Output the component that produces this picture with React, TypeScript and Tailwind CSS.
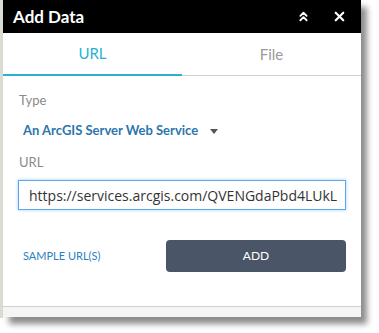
import { ChevronsUp, X } from 'lucide-react';

export default function App() {
	return (
		<div
			className="flex h-[333px] w-[379px] bg-white"
			style={{ fontFamily: "Lato, 'Open Sans', sans-serif" }}
		>
			<div className="w-[3px] h-[318px] bg-[#d9dcd2]" />
			<div className="w-[358px] h-[317px] bg-white flex flex-col shadow-[6px_7px_6px_rgba(0,0,0,0.45)]">
				{/* Header */}
				<div className="h-[33px] bg-black flex items-center pl-[10px] pr-[14px]">
					<span className="text-white text-[17px] font-bold flex-1">Add Data</span>
					<ChevronsUp className="text-white w-[15px] h-[15px] mr-[21px]" strokeWidth={3} />
					<X className="text-white w-[15px] h-[15px]" strokeWidth={3.5} />
				</div>

				{/* Tabs */}
				<div className="flex h-[43px] border-b border-[#cfcfcf]">
					<div className="w-[179px] flex items-center justify-center text-[15px] text-[#27b3cf] border-b-2 border-[#27b3cf] -mb-px">
						URL
					</div>
					<div className="flex-1 flex items-center justify-center text-[15px] text-[#9a9a9a]">
						File
					</div>
				</div>

				{/* Body */}
				<div className="flex flex-col px-[16px] pt-[15px]">
					<span className="text-[13px] text-[#8a8a8a] leading-[18px]">Type</span>
					<div className="flex items-center mt-[13px] pl-[4px] h-[18px]">
						<span className="text-[13px] font-bold text-[#2c76ad]">
							An ArcGIS Server Web Service
						</span>
						<span className="ml-[12px] w-0 h-0 border-l-[4px] border-r-[4px] border-t-[5px] border-l-transparent border-r-transparent border-t-[#555]" />
					</div>
					<span className="text-[13px] text-[#8a8a8a] leading-[18px] mt-[13px]">URL</span>
					<div className="mt-[9px] h-[30px] w-[328px] -ml-px border border-[#59a8f0] shadow-[0_0_3px_rgba(89,168,240,0.6)] flex items-center pl-[10px] overflow-hidden">
						<span
							className="text-[14px] text-[#333] whitespace-nowrap"
							style={{ fontFamily: "'Open Sans', sans-serif" }}
						>
							https://services.arcgis.com/QVENGdaPbd4LUkL
						</span>
					</div>
					<div className="flex items-center mt-[30px]">
						<span className="text-[11px] text-[#2a7fbf] pl-[4px] flex-1">SAMPLE URL(S)</span>
						<button className="w-[180px] h-[32px] rounded-[4px] bg-[#4a5567] text-white text-[12px] mr-[-1px]">
							ADD
						</button>
					</div>
				</div>

				<div className="mt-auto h-[11px] border-t border-[#cfcfcf] bg-[#f5f5f5]" />
			</div>
		</div>
	);
}
